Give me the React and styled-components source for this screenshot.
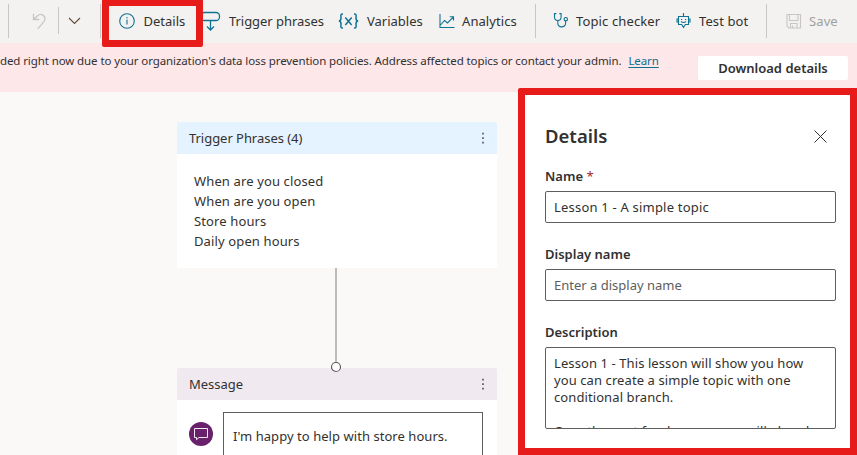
import React from "react";
import styled, { createGlobalStyle } from "styled-components";

const Global = createGlobalStyle`
  * { box-sizing: border-box; }
  body { margin: 0; overflow: hidden; }
`;

const Page = styled.div`
  position: relative;
  width: 857px;
  height: 455px;
  overflow: hidden;
  display: flex;
  flex-direction: column;
  background: #faf9f8;
  color: #323130;
  font-family: "Noto Sans", "Open Sans", sans-serif;
  font-size: 13px;
  white-space: nowrap;
`;

const Text = styled.span`
  letter-spacing: ${(p) => p.$track || 0}px;
`;

const Toolbar = styled.header`
  display: flex;
  flex: none;
  height: 43px;
  background: #f3f2f1;
`;

const Divider = styled.i`
  flex: none;
  width: 1px;
  height: ${(p) => p.$height || 34}px;
  margin: ${(p) => p.$top || 4}px 0 0 ${(p) => p.$gap || 0}px;
  background: #c8c6c4;
`;

const Tool = styled.button`
  display: flex;
  flex: none;
  align-items: center;
  width: ${(p) => p.$width}px;
  height: 42px;
  margin: 0 0 0 ${(p) => p.$gap || 0}px;
  padding: 0;
  border: 0;
  background: none;
  color: ${(p) => (p.disabled ? "#a19f9d" : "#323130")};
  font: inherit;
  white-space: nowrap;
`;

const IconSlot = styled.span`
  display: flex;
  flex: none;
  width: ${(p) => p.$width}px;
`;

const Glyph = styled.svg`
  display: block;
  flex: none;
  fill: none;
  stroke: ${(p) => p.$color || "#107394"};
  stroke-width: ${(p) => p.$weight || 1.1};
  overflow: visible;
`;

const Notice = styled.div`
  display: flex;
  flex: none;
  justify-content: space-between;
  height: 49px;
  background: #fde7e9;
  font-size: 11.5px;
  line-height: 36px;
`;

const LearnLink = styled.a`
  margin-left: 7px;
  color: #106f8e;
  letter-spacing: -0.1px;
  text-decoration: underline;
  text-underline-offset: 2px;
`;

const DownloadButton = styled.button`
  width: 150px;
  height: 24px;
  margin: 13px 9px 0 0;
  padding: 0;
  border: 0;
  border-radius: 2px;
  background: #fff;
  color: #323130;
  font: 600 13px/24px "Noto Sans", sans-serif;
`;

const Workspace = styled.main`
  display: flex;
  flex: 1;
  justify-content: space-between;
`;

const Canvas = styled.section`
  display: flex;
  flex-direction: column;
  width: 320px;
  margin: 30px 0 0 177px;
`;

const Node = styled.article`
  flex: none;
  height: ${(p) => p.$height}px;
  border-radius: 2px;
  overflow: hidden;
  background: #fff;
`;

const NodeHeader = styled.div`
  display: flex;
  align-items: center;
  justify-content: space-between;
  height: 32px;
  padding: 0 12px;
  background: ${(p) => p.$tone};
`;

const Phrases = styled.ul`
  margin: 0;
  padding: 17px;
  list-style: none;
  line-height: 20px;
`;

const Connector = styled.div`
  position: relative;
  z-index: 1;
  display: flex;
  flex: none;
  justify-content: center;
  height: 100px;
`;

const MessageBody = styled.div`
  display: flex;
  padding: 12px 14px 0 12px;
`;

const Avatar = styled.span`
  display: flex;
  align-items: center;
  justify-content: center;
  width: 24px;
  height: 24px;
  margin: 10px 10px 0 0;
  border-radius: 50%;
  background: #68216a;
`;

const MessageBox = styled.div`
  width: 260px;
  height: 60px;
  padding-left: 9px;
  border: 1px solid #605e5c;
  line-height: 46px;
`;

const Panel = styled.aside`
  width: 339px;
  height: 367px;
  margin-top: -4px;
  padding: 27px 14px 0 20px;
  border: 7px solid #e81b1b;
  border-radius: 2px 0 0 0;
  background: #fff;
  z-index: 1;
`;

const PanelHeader = styled.div`
  display: flex;
  align-items: center;
  justify-content: space-between;
  height: 28px;
  margin-bottom: 16px;
  padding-right: 9px;
`;

const PanelTitle = styled.h2`
  margin: 0;
  font-size: 18.5px;
  font-weight: 600;
  line-height: 28px;
`;

const Label = styled.label`
  display: block;
  height: 20px;
  margin-bottom: 5px;
  font-weight: 600;
  line-height: 20px;
`;

const Required = styled.span`
  color: #a4262c;
  font-weight: 400;
`;

const Field = styled.div`
  width: 291px;
  height: ${(p) => (p.$multiline ? 82 : 32)}px;
  margin-bottom: 21px;
  padding: ${(p) => (p.$multiline ? "7px 8px 0" : "0 8px")};
  overflow: hidden;
  border: 1px solid #605e5c;
  border-radius: 2px;
  color: ${(p) => (p.$placeholder ? "#605e5c" : "#323130")};
  line-height: ${(p) => (p.$multiline ? 17 : 30)}px;
  white-space: pre;
`;

const Highlight = styled.div`
  position: absolute;
  top: -1px;
  left: 102px;
  width: 101px;
  height: 48px;
  border: 7px solid #e81b1b;
  border-radius: 2px;
`;

const Undo = () => (
  <Glyph width="15" height="17" viewBox="0 0 15 17" $color="#c8c6c4" $weight="1.3">
    <path d="M1.500.8v5.700h5.700M1.800 6.200L5.500 2.800C8.500 0 13 2 13 6c0 2.200-1.500 3.500-7.300 9.800" />
  </Glyph>
);

const Chevron = () => (
  <Glyph width="13" height="8" viewBox="0 0 13 8" $color="#604b3a">
    <path d="M1 1l5.500 5.500L12 1" />
  </Glyph>
);

const Info = () => (
  <Glyph width="16" height="16" viewBox="0 0 16 16">
    <circle cx="8" cy="8" r="7.300" />
    <path d="M8 6.500v5M8 4v1.300" />
  </Glyph>
);

const Trigger = () => (
  <Glyph width="21" height="20" viewBox="0 0 21 20" $weight="1.300">
    <rect x="1" y="1.500" width="18.500" height="8" rx="3.500" />
    <path d="M10.500 9.500v9M7 15.500l3.500 3.500 3.500-3.500" />
  </Glyph>
);

const Variable = () => (
  <Glyph width="21" height="16" viewBox="0 0 21 16" $weight="1.500">
    <path d="M5 1C2 .8 3 3 3 5S2.500 8 .800 8C2.500 8 3 9 3 11s-1 4.200 2 4M16 1c3-.2 2 2 2 4s.500 3 2.200 3C18.500 8 18 9 18 11s1 4.200-2 4M7.300 4.500l6.400 7.500M13.700 4.500L7.300 12" />
  </Glyph>
);

const Chart = () => (
  <Glyph width="16" height="15" viewBox="0 0 16 15">
    <path d="M1 0v13.500h14.500M1.500 11l4-4.500 3 2.500 6-6.200M10.800 2.800h3.700v3.700" />
  </Glyph>
);

const Stethoscope = () => (
  <Glyph width="16" height="16" viewBox="0 0 16 16">
    <path d="M3.300.6H1.500v3.200c0 5 6.600 5 6.600 0V.600H6.300M4.800 7.500v2.800c0 4.800 7.800 4.800 7.800 0V8" />
    <circle cx="12.800" cy="6.200" r="1.700" />
  </Glyph>
);

const Bot = () => (
  <Glyph width="15" height="16" viewBox="0 0 15 16">
    <path d="M7.500 0v3M2.500 3.500h10v8H9.300l-1.800 3-1.800-3H2.500zM2.500 6H1v3h1.500M12.500 6H14v3h-1.500M5 6.500h1.200M9 6.500h1.200M5 8.500q2.500 2 5 0" />
  </Glyph>
);

const Disk = () => (
  <Glyph width="16" height="15" viewBox="0 0 16 15" $color="#c8c6c4">
    <path d="M1 .500h13.500v13.500H3L1 12zM3.500.500v6h8.500v-6M4.500 14V9.500H11V14M6.500 11.500V14" />
  </Glyph>
);

const More = () => (
  <Glyph width="4" height="12" viewBox="0 0 4 12" $weight="1.700" $color="#5c5a60">
    <path d="M2 .700v1.700M2 5.200v1.700M2 9.700v1.700" />
  </Glyph>
);

const Close = () => (
  <Glyph width="13" height="13" viewBox="0 0 13 13" $color="#323130" $weight="1">
    <path d="M.500.500l12 12M12.500.500l-12 12" />
  </Glyph>
);

const Chat = () => (
  <Glyph width="14" height="12" viewBox="0 0 14 12" $color="#f3eaf3" $weight="1">
    <path d="M.500.500h13v9H5l-2.500 2.200V9.500h-2z" />
  </Glyph>
);

const Link = () => (
  <Glyph width="12" height="105" viewBox="0 0 12 105" $color="#bebbb9" $weight="2">
    <path d="M5 0v95" />
    <circle cx="5" cy="99" r="4.500" fill="#fff" stroke="#605e5c" strokeWidth="1.200" />
  </Glyph>
);

const tools = [
  { icon: Info, label: "Details", slot: 24.5, width: 81, gap: 18 },
  { icon: Trigger, label: "Trigger phrases", slot: 29, width: 138, track: -0.05 },
  { icon: Variable, label: "Variables", slot: 29, width: 101 },
  { icon: Chart, label: "Analytics", slot: 23, width: 96, track: 0.08 },
];

const phrases = ["When are you closed", "When are you open", "Store hours", "Daily open hours"];

export default function App() {
  return (
    <Page>
      <Global />
      <Toolbar>
        <Divider $gap={8} />
        <Tool disabled $gap={23} $width={26}><Undo /></Tool>
        <Divider $height={27} $top={7} />
        <Tool $gap={9} $width={13}><Chevron /></Tool>
        <Divider $gap={19} />
        {tools.map(({ icon: Icon, label, slot, width, gap, track }) => (
          <Tool key={label} $width={width} $gap={gap}>
            <IconSlot $width={slot}><Icon /></IconSlot>
            <Text $track={track}>{label}</Text>
          </Tool>
        ))}
        <Divider />
        <Tool $gap={17} $width={123}><IconSlot $width={23}><Stethoscope /></IconSlot><Text $track={0.13}>Topic checker</Text></Tool>
        <Tool $width={90}><IconSlot $width={23}><Bot /></IconSlot><Text $track={0.1}>Test bot</Text></Tool>
        <Divider />
        <Tool disabled $gap={19} $width={70}><IconSlot $width={23}><Disk /></IconSlot><Text $track={0.1}>Save</Text></Tool>
      </Toolbar>
      <Notice>
        <div>
          <Text $track={-0.1}>ded right now due to your organization's data loss prevention policies. Address affected topics or contact your admin.</Text>
          <LearnLink>Learn</LearnLink>
        </div>
        <DownloadButton>Download details</DownloadButton>
      </Notice>
      <Workspace>
        <Canvas>
          <Node $height={146}>
            <NodeHeader $tone="#e5f2ff"><Text $track={-0.04}>Trigger Phrases (4)</Text><More /></NodeHeader>
            <Phrases>
              {phrases.map((phrase) => (
                <li key={phrase}><Text $track={0.13}>{phrase}</Text></li>
              ))}
            </Phrases>
          </Node>
          <Connector><Link /></Connector>
          <Node $height={120}>
            <NodeHeader $tone="#f0e9ef"><Text>Message</Text><More /></NodeHeader>
            <MessageBody>
              <Avatar><Chat /></Avatar>
              <MessageBox><Text $track={0.05}>I'm happy to help with store hours.</Text></MessageBox>
            </MessageBody>
          </Node>
        </Canvas>
        <Panel>
          <PanelHeader><PanelTitle>Details</PanelTitle><Close /></PanelHeader>
          <Label>Name <Required>*</Required></Label>
          <Field><Text $track={0.2}>Lesson 1 - A simple topic</Text></Field>
          <Label>Display name</Label>
          <Field $placeholder><Text>Enter a display name</Text></Field>
          <Label>Description</Label>
          <Field $multiline>
            <Text $track={0.09}>{"Lesson 1 - This lesson will show you how\nyou can create a simple topic with one\nconditional branch.\n\nOver the next few lessons, you will already"}</Text>
          </Field>
        </Panel>
      </Workspace>
      <Highlight />
    </Page>
  );
}
